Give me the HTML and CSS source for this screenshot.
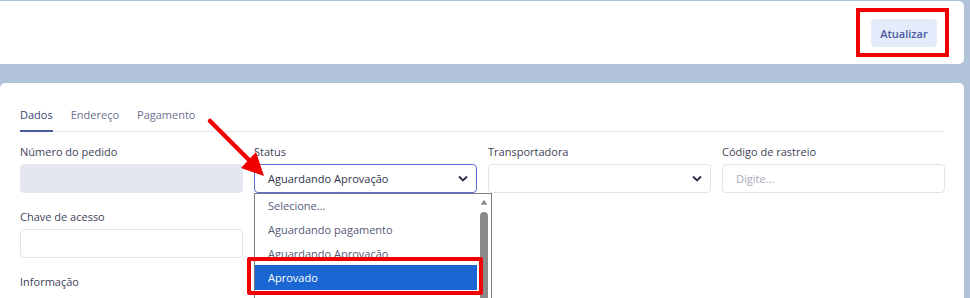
FILE: index.html
```html
<!DOCTYPE html>
<html lang="pt">
<head>
<meta charset="utf-8">
<link rel="stylesheet" href="styles.css">
</head>
<body>
<div class="page">
  <header class="topbar">
    <button class="btn-update">Atualizar</button>
  </header>
  <section class="card">
    <nav class="tabs">
      <span class="tab active">Dados</span>
      <span class="tab">Endereço</span>
      <span class="tab">Pagamento</span>
    </nav>
    <div class="grid">
      <div class="field">
        <label>Número do pedido</label>
        <div class="input disabled"></div>
      </div>
      <div class="field status">
        <label>Status</label>
        <div class="input select focus"><span>Aguardando Aprovação</span><svg class="chev" viewBox="0 0 10 6"><path d="M1 1l4 4 4-4" fill="none" stroke="#2b2f45" stroke-width="1.8"/></svg></div>
        <div class="dropdown">
          <div class="opts">
            <div class="opt">Selecione...</div>
            <div class="opt">Aguardando pagamento</div>
            <div class="opt">Aguardando Aprovação</div>
            <div class="opt sel">Aprovado</div>
          </div>
          <div class="scroll">
            <svg class="up" viewBox="0 0 10 8"><path d="M5 1L9 7H1z" fill="#888"/></svg>
            <div class="thumb"></div>
          </div>
        </div>
      </div>
      <div class="field">
        <label>Transportadora</label>
        <div class="input select"><span></span><svg class="chev" viewBox="0 0 10 6"><path d="M1 1l4 4 4-4" fill="none" stroke="#2b2f45" stroke-width="1.8"/></svg></div>
      </div>
      <div class="field">
        <label>Código de rastreio</label>
        <div class="input"><span class="ph">Digite...</span></div>
      </div>
      <div class="field">
        <label>Chave de acesso</label>
        <div class="input"></div>
      </div>
    </div>
    <div class="field info">
      <label>Informação</label>
    </div>
  </section>
  <div class="mark mark-top"></div>
  <div class="mark mark-opt"></div>
  <svg class="arrow" width="970" height="298" viewBox="0 0 970 298">
    <line x1="210" y1="121" x2="250" y2="161" stroke="#f00000" stroke-width="4.5" stroke-linecap="round"/>
    <polygon points="264,176 241,168 256,152" fill="#f00000"/>
  </svg>
</div>
</body>
</html>
```

FILE: styles.css
```css
* { box-sizing: border-box; }
html, body { margin: 0; padding: 0; }
body {
  background: #b0c3d8;
  font-family: "Open Sans", "Noto Sans", sans-serif;
  font-size: 11px;
  color: #3f4258;
  width: 970px;
  height: 298px;
  overflow: hidden;
}
.page { position: relative; padding-top: 1px; }
.topbar {
  width: 964px;
  height: 63px;
  background: #fff;
  border-radius: 0 5px 5px 0;
  display: flex;
  justify-content: flex-end;
  align-items: center;
  padding-right: 27px;
}
.btn-update {
  font-family: inherit;
  font-size: 11px;
  font-weight: 600;
  color: #4a5aa0;
  background: #e4ecfb;
  border: none;
  border-radius: 4px;
  width: 66px;
  height: 28px;
  margin-top: 1px;
}
.card {
  margin-top: 19px;
  width: 964px;
  height: 215px;
  background: #fff;
  border-radius: 5px 5px 0 0;
  padding: 23px 21px 0 20px;
  overflow: hidden;
}
.tabs {
  display: flex;
  gap: 18px;
  border-bottom: 1px solid #e3e5ef;
  height: 26px;
}
.tab {
  color: #6b7090;
  line-height: 14px;
  padding-top: 2px;
}
.tab.active {
  color: #3a4677;
  border-bottom: 2px solid #4a5aa0;
  height: 26px;
}
.grid {
  display: grid;
  grid-template-columns: repeat(4, 223px);
  column-gap: 11px;
  row-gap: 17px;
  margin-top: 13px;
}
.field { display: flex; flex-direction: column; position: relative; }
.field label { line-height: 14px; margin-bottom: 5px; color: #3f4258; }
.input {
  height: 29px;
  border: 1px solid #e1e3ec;
  border-radius: 4px;
  background: #fff;
  display: flex;
  align-items: center;
  padding: 0 13px;
}
.input.disabled { background: #e4e7ef; border-color: #e4e7ef; }
.input.select { justify-content: space-between; padding-right: 8px; color: #2f3348; }
.input.focus { border-color: #5d6fd8; }
.chev { width: 10px; height: 7px; }
.ph { color: #a9abb8; }
.dropdown {
  position: absolute;
  top: 48px;
  left: 0;
  width: 238px;
  height: 120px;
  background: #fff;
  border: 1px solid #7b7b7b;
  display: flex;
  z-index: 2;
}
.opts { flex: 1; }
.opt {
  height: 24px;
  line-height: 24px;
  padding-left: 13px;
  color: #555a78;
}
.opt.sel { background: #1a66d2; color: #fff; margin-top: -1px; height: 25px; line-height: 25px; }
.scroll {
  width: 14px;
  display: flex;
  flex-direction: column;
  align-items: center;
  padding-top: 5px;
}
.up { width: 10px; height: 8px; }
.thumb {
  margin-top: 6px;
  width: 8px;
  height: 120px;
  background: #8a8a8a;
  border-radius: 4px;
}
.info { margin-top: 17px; }
.mark {
  position: absolute;
  border: 4px solid #f00000;
  z-index: 3;
}
.mark-top { left: 856px; top: 8px; width: 93px; height: 49px; }
.mark-opt { left: 247px; top: 257px; width: 236px; height: 38px; border-width: 4.5px; border-radius: 2px; }
.arrow { position: absolute; left: 0; top: 0; pointer-events: none; z-index: 3; }
```
